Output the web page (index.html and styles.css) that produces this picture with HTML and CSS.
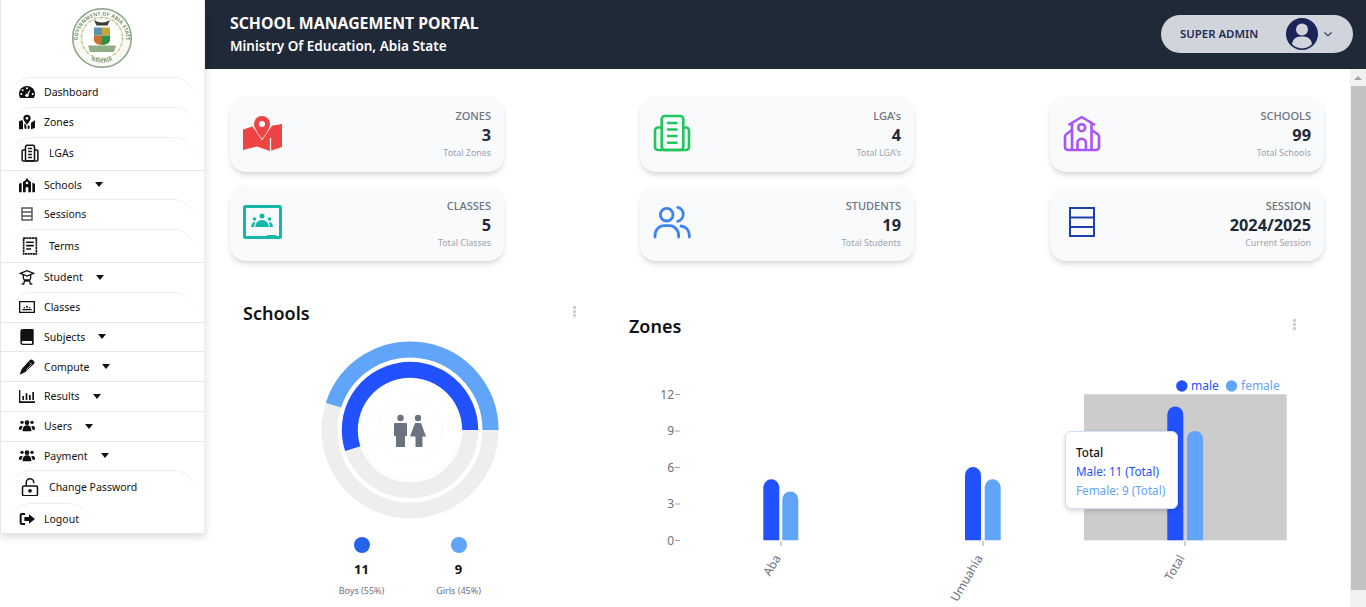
FILE: index.html
```html
<!DOCTYPE html>
<html lang="en">
<head>
<meta charset="utf-8">
<title>School Management Portal</title>
<link rel="stylesheet" href="styles.css">
</head>
<body>
<div class="app">
  <aside class="sidebar">
    <div class="logo">
      <svg width="62" height="62" viewBox="0 0 62 62">
        <defs>
          <path id="sealTop" d="M6.500 33a24.500 24.500 0 1 1 49 0"/>
          <path id="sealBot" d="M14 49a25.500 25.500 0 0 0 34 0"/>
        </defs>
        <g class="seal">
          <circle cx="31" cy="31" r="29.300" fill="#f8f9f4" stroke="#8aa283" stroke-width="1.500"/>
          <circle cx="31" cy="31" r="20.500" fill="#fff" stroke="#b9c7b0" stroke-width=".8"/>
          <circle cx="31" cy="31" r="20.500" fill="none" stroke="#d9b65c" stroke-width="1.800" stroke-dasharray="1.400 4.500"/>
          <text class="seal-text"><textPath href="#sealTop" startOffset="50%" text-anchor="middle">GOVERNMENT OF ABIA STATE</textPath></text>
          <text class="seal-text"><textPath href="#sealBot" startOffset="50%" text-anchor="middle">NIGERIA</textPath></text>
          <path d="M23 13q8 5 16 0l-2.500 5.500h-11z" fill="#3c3f38"/>
          <rect x="23" y="20.500" width="8" height="8" fill="#5a93b0"/>
          <rect x="31" y="20.500" width="8" height="8" fill="#c9a53b"/>
          <path d="M23 28.500h8V38q-6 0-8-4z" fill="#c9702f"/>
          <path d="M31 28.500h8V34q-2 4-8 4z" fill="#2f8f45"/>
          <path d="M17 38.500h28l-2 6.500H19z" fill="#90ad85"/>
        </g>
      </svg>
    </div>
    <ul class="menu">
      <li class="item pill"><svg class="ic" viewBox="0 0 24 24"><path d="M12 3A12 12 0 0 0 0 15c0 2.300.7 4.400 2 6h20c1.300-1.600 2-3.700 2-6A12 12 0 0 0 12 3z"/><g fill="#fff"><circle cx="12" cy="6.500" r="1.500"/><circle cx="5.500" cy="9.500" r="1.500"/><circle cx="3.500" cy="15" r="1.500"/><circle cx="20.500" cy="15" r="1.500"/><circle cx="12" cy="17" r="2.500"/><path d="M11 17l5-8 1 .6-4 8.400z"/></g></svg><span>Dashboard</span></li>
      <li class="item pill"><svg class="ic" viewBox="0 0 24 24"><path d="M12 1a5.500 5.500 0 0 0-5.500 5.500C6.500 10 12 16 12 16s5.500-6 5.500-9.500A5.500 5.500 0 0 0 12 1zm0 7.500a2 2 0 1 1 0-4 2 2 0 0 1 0 4zM0 11l5-2 1 3v11H0zM8 14l3 3v6l-3-1.500zM16 18l-3-1v6l3-1.500zM18 13l6-3.500V21l-6 2z"/></svg><span>Zones</span></li>
      <li class="item pill big"><svg class="ic lg ol" viewBox="0 0 24 24" stroke="#111" stroke-width="2"><rect x="6" y="1.500" width="12" height="21" rx="2"/><path d="M6 8H3a1.500 1.500 0 0 0-1.500 1.500V21A1.500 1.500 0 0 0 3 22.500h18a1.500 1.500 0 0 0 1.500-1.500V9.500A1.500 1.500 0 0 0 21 8h-3M9.500 6h5M9.500 10h5M9.500 14h5M9.500 18h5"/></svg><span>LGAs</span></li>
      <li class="item line"><svg class="ic" viewBox="0 0 24 24"><path d="M12 1l2 3.500 4 3V23h-4v-6a2 2 0 0 0-4 0v6H6V7.500l4-3zm0 6a2 2 0 1 0 0 4 2 2 0 0 0 0-4zM0 10l4-1.500V23H0zM24 10l-4-1.500V23h4z"/></svg><span>Schools</span><i class="caret"></i></li>
      <li class="item pill"><svg class="ic ol" viewBox="0 0 24 24" stroke="#555" stroke-width="2.200"><rect x="4.500" y="3" width="15" height="18"/><path d="M4.500 9h15M4.500 15h15"/></svg><span>Sessions</span></li>
      <li class="item pill big"><svg class="ic lg ol" viewBox="0 0 24 24" stroke="#111" stroke-width="2.200"><rect x="3.500" y="1.500" width="17" height="21" stroke-dasharray="3 .6"/><path d="M7 7h10M7 11.500h10M7 16h6.500"/></svg><span>Terms</span></li>
      <li class="item line"><svg class="ic ol" viewBox="0 0 24 24" stroke="#111" stroke-width="2"><path d="M2 6.500L12 2.500l10 4-10 4z"/><path d="M6.500 9v3.500a5.500 5.500 0 0 0 11 0V9M7 23l1.500-6.500h7L17 23M4 22.500h3M17 22.500h3"/></svg><span>Student</span><i class="caret"></i></li>
      <li class="item pill"><svg class="ic" viewBox="0 0 24 24"><path d="M0 3h24v18H0zm2 2v14h20V5z"/><path d="M5 15h14v1.800H5zM7 12h2v2H7zM11 10h2v4h-2zM15 12h2v2h-2z"/></svg><span>Classes</span></li>
      <li class="item line"><svg class="ic" viewBox="0 0 24 24"><path d="M6 0h14a2 2 0 0 1 2 2v20a2 2 0 0 1-2 2H6a4 4 0 0 1-4-4V4a4 4 0 0 1 4-4zm0 18a2 2 0 0 0 0 4h13.500v-4z"/></svg><span>Subjects</span><i class="caret"></i></li>
      <li class="item line"><svg class="ic" viewBox="0 0 24 24"><path d="M16 2a3.500 3.500 0 0 1 5 0l1 1a3.500 3.500 0 0 1 0 5L9 20l-8 3.500L4 15z"/><path d="M16 5l3 3-8 8" fill="none" stroke="#fff" stroke-width="1"/></svg><span>Compute</span><i class="caret"></i></li>
      <li class="item line"><svg class="ic" viewBox="0 0 24 24"><path d="M0 3h2v17h22v2.500H0zM5 12h2.500v6H5zM10 8h2.500v10H10zM15 10.500h2.500V18H15zM20 6h2.500v12H20z"/></svg><span>Results</span><i class="caret"></i></li>
      <li class="item line"><svg class="ic" viewBox="0 0 24 24"><use href="#people"/></svg><span>Users</span><i class="caret"></i></li>
      <li class="item line"><svg class="ic" viewBox="0 0 24 24"><use href="#people"/></svg><span>Payment</span><i class="caret"></i></li>
      <li class="item pill big"><svg class="ic lg ol" viewBox="0 0 24 24" stroke="#111" stroke-width="2"><rect x="2" y="10.500" width="20" height="13" rx="2"/><path d="M7 10.500V6a5 5 0 0 1 10 0v1"/><circle cx="12" cy="17" r="1.500" fill="#111"/></svg><span>Change Password</span></li>
      <li class="item pill fit"><svg class="ic" viewBox="0 0 24 24"><path d="M15 5l9 7-9 7v-4H8V9h7zM9 3H4a3 3 0 0 0-3 3v12a3 3 0 0 0 3 3h5v-3H4V6h5z"/></svg><span>Logout</span></li>
    </ul>
  </aside>

  <div class="page">
    <header class="topbar">
      <div class="brand">
        <div class="brand-title">SCHOOL MANAGEMENT PORTAL</div>
        <div class="brand-sub">Ministry Of Education, Abia State</div>
      </div>
      <div class="user">
        <span class="user-name">SUPER ADMIN</span>
        <svg class="avatar" width="32" height="32" viewBox="0 0 32 32"><circle cx="16" cy="16" r="16" fill="#1a2456"/><circle cx="16" cy="11.500" r="6" fill="#d1d5db"/><path d="M6 26c1-6 5-7.500 10-7.500S25 20 26 26a13.500 13.500 0 0 1-20 0z" fill="#d1d5db"/></svg>
        <svg class="chev" width="10" height="10" viewBox="0 0 10 10"><path d="M1.500 3.500L5 6.800l3.500-3.300" fill="none" stroke="#1e2a55" stroke-width="1.100"/></svg>
      </div>
    </header>

    <div class="body-row">
      <main class="content">
        <section class="cards">
          <article class="card">
            <svg class="card-ic" viewBox="0 0 40 40"><path d="M0 15.500L11 12l8 14 8-14 12-2v23l-12 4-13-4.500L0 36z" fill="#ef4444"/><path d="M9.500 11L19 25l9.500-14" fill="none" stroke="#f9fafb" stroke-width="1.500"/><path d="M27.500 24v13" stroke="#f9fafb" stroke-width="1.200"/><path d="M19 2a8 8 0 0 0-8 8c0 5 8 15 8 15s8-10 8-15a8 8 0 0 0-8-8z" fill="#ef4444"/><circle cx="19" cy="10" r="3" fill="#f9fafb"/></svg>
            <div class="card-text"><div class="card-title">ZONES</div><div class="card-value">3</div><div class="card-sub">Total Zones</div></div>
          </article>
          <article class="card">
            <svg class="card-ic" viewBox="0 0 40 40" fill="none" stroke="#22c55e" stroke-width="2.600" stroke-linecap="round" stroke-linejoin="round"><rect x="8.700" y="2" width="21.600" height="34" rx="3"/><path d="M8.700 13.500H5a3 3 0 0 0-3 3V33a3 3 0 0 0 3 3h28a3 3 0 0 0 3-3V16.500a3 3 0 0 0-3-3h-2.700M15 9h8.500M15 15.500h8.500M15 22h8.500M15 28.700h8.500"/></svg>
            <div class="card-text"><div class="card-title">LGA's</div><div class="card-value">4</div><div class="card-sub">Total LGA's</div></div>
          </article>
          <article class="card">
            <svg class="card-ic" viewBox="0 0 40 40" fill="none" stroke="#a855f7" stroke-width="2.600" stroke-linejoin="round"><path d="M5.500 11L18.700 3 32 11"/><path d="M9 8.500V36M28.500 8.500V36"/><path d="M9 16L3.500 20Q2 21 2 23v10a3 3 0 0 0 3 3h28a3 3 0 0 0 3-3V23q0-2-1.500-3L28.500 16"/><circle cx="18.700" cy="13.700" r="3.500"/><path d="M14.500 36v-7a4.200 4.200 0 0 1 8.400 0v7"/></svg>
            <div class="card-text"><div class="card-title">SCHOOLS</div><div class="card-value">99</div><div class="card-sub">Total Schools</div></div>
          </article>
          <article class="card">
            <svg class="card-ic" viewBox="0 0 40 40"><rect x="1.500" y="3.500" width="36" height="31" rx="1" fill="none" stroke="#14b8a6" stroke-width="3"/><rect x="24" y="32" width="9" height="3" fill="#14b8a6"/><circle cx="19" cy="13" r="2.500" fill="#14b8a6"/><circle cx="11.500" cy="16" r="1.800" fill="#14b8a6"/><circle cx="26.500" cy="16" r="1.800" fill="#14b8a6"/><path d="M12 24q1-7 7-7t7 7zM8 24q.5-5 4-5l-1 5zM30 24q-.5-5-4-5l1 5z" fill="#14b8a6"/></svg>
            <div class="card-text"><div class="card-title">CLASSES</div><div class="card-value">5</div><div class="card-sub">Total Classes</div></div>
          </article>
          <article class="card">
            <svg class="card-ic" viewBox="0 0 40 40" fill="none" stroke="#3b82f6" stroke-width="2.800" stroke-linecap="round"><circle cx="13.700" cy="11.700" r="6.300"/><path d="M2 34v-2a9.300 9.300 0 0 1 9.300-9.300h5A9.300 9.300 0 0 1 25.600 32v2M24.700 4.300a7.200 7.200 0 0 1 0 14M28 23a9 9 0 0 1 8.300 9v2"/></svg>
            <div class="card-text"><div class="card-title">STUDENTS</div><div class="card-value">19</div><div class="card-sub">Total Students</div></div>
          </article>
          <article class="card">
            <svg class="card-ic" viewBox="0 0 40 40" fill="none" stroke="#1e40af" stroke-width="2"><rect x="7" y="5" width="24" height="28"/><path d="M7 14.500h24M7 24h24"/></svg>
            <div class="card-text"><div class="card-title">SESSION</div><div class="card-value">2024/2025</div><div class="card-sub">Current Session</div></div>
          </article>
        </section>

        <section class="charts">
          <div class="panel-schools">
            <div class="panel-head">
              <h2 class="panel-title">Schools</h2>
              <span class="dots"><i></i><i></i><i></i></span>
            </div>
            <svg class="donut" width="180" height="180" viewBox="0 0 180 180">
              <circle cx="90" cy="90" r="80.500" fill="none" stroke="#eeeeee" stroke-width="16"/>
              <circle cx="90" cy="90" r="60.200" fill="none" stroke="#eeeeee" stroke-width="16"/>
              <circle cx="90" cy="90" r="50" fill="none" stroke="#f5f5f5" stroke-width=".6"/>
              <circle cx="90" cy="90" r="32" fill="none" stroke="#f5f5f5" stroke-width=".6"/>
              <path d="M170.500 90A80.500 80.500 0 0 0 13.440 65.120" fill="none" stroke="#60a5fa" stroke-width="16"/>
              <path d="M150.200 90A60.200 60.200 0 1 0 32.750 108.600" fill="none" stroke="#2251ff" stroke-width="16"/>
              <g fill="#6b7280">
                <circle cx="80.500" cy="78" r="3.200"/>
                <path d="M75 83h11a1 1 0 0 1 1 1v12h-2v11h-9V96h-2V84a1 1 0 0 1 1-1z"/>
                <circle cx="98" cy="78" r="3.200"/>
                <path d="M95 83h6l5 13.500h-3.500V107h-7V96.500H90z"/>
              </g>
            </svg>
            <div class="legend">
              <div class="legend-col"><i class="ldot boys"></i><b class="lnum">11</b><span class="ltxt">Boys (55%)</span></div>
              <div class="legend-col"><i class="ldot girls"></i><b class="lnum">9</b><span class="ltxt">Girls (45%)</span></div>
            </div>
          </div>

          <div class="panel-zones">
            <div class="panel-head zones-head">
              <h2 class="panel-title">Zones</h2>
              <span class="dots"><i></i><i></i><i></i></span>
            </div>
            <div class="chart-wrap">
              <svg class="bars" width="695" height="264" viewBox="615 343 695 264">
                <rect x="1084" y="394.300" width="202.700" height="146" fill="#cccccc"/>
                <g class="ytick" stroke="#9ca3af" stroke-width="1">
                  <path d="M675 394.500h5M675 431h5M675 467.500h5M675 504h5M675 540.500h5"/>
                </g>
                <g class="ylab" text-anchor="end">
                  <text x="674" y="398.500">12</text><text x="674" y="435">9</text><text x="674" y="471.500">6</text><text x="674" y="508">3</text><text x="674" y="544.500">0</text>
                </g>
                <g stroke="#a3a3a3" stroke-width="1"><path d="M781 541v5M983 541v5M1185 541v5"/></g>
                <g fill="#2251ff">
                  <path d="M763.300 540.300V487.300a8 8 0 0 1 16 0V540.300z"/>
                  <path d="M965 540.300V475.100a8 8 0 0 1 16 0V540.300z"/>
                  <path d="M1167.300 540.300V414.500a8 8 0 0 1 16 0V540.300z"/>
                </g>
                <g fill="#60a5fa">
                  <path d="M782.300 540.300V499.500a8 8 0 0 1 16 0V540.300z"/>
                  <path d="M984.700 540.300V487.300a8 8 0 0 1 16 0V540.300z"/>
                  <path d="M1187 540.300V438.900a8 8 0 0 1 16 0V540.300z"/>
                </g>
                <g class="xlab" text-anchor="end">
                  <text transform="translate(781 558) rotate(-60)">Aba</text>
                  <text transform="translate(983 558) rotate(-60)">Umuahia</text>
                  <text transform="translate(1185 558) rotate(-60)">Total</text>
                </g>
                <circle cx="1181.800" cy="386" r="5.700" fill="#2251ff"/>
                <text class="legtxt" x="1191" y="390" fill="#2251ff">male</text>
                <circle cx="1231.500" cy="386" r="5.700" fill="#60a5fa"/>
                <text class="legtxt" x="1241" y="390" fill="#60a5fa">female</text>
              </svg>
              <div class="tooltip">
                <div class="tip-title">Total</div>
                <div class="tip-male">Male: 11 (Total)</div>
                <div class="tip-female">Female: 9 (Total)</div>
              </div>
            </div>
          </div>
        </section>
      </main>
      <div class="scrollbar" aria-hidden="true">
        <div class="sb-up"><i></i></div>
        <div class="sb-thumb"></div>
        <div class="sb-end"></div>
      </div>
    </div>
  </div>
</div>
<svg class="defs" width="0" height="0"><defs><g id="people"><circle cx="12" cy="7" r="3.500"/><circle cx="4.500" cy="6.500" r="2.500"/><circle cx="19.500" cy="6.500" r="2.500"/><path d="M5.500 20v-2.500c0-4 3-6.500 6.500-6.500s6.500 2.500 6.500 6.500V20zM4 17.500c0-2 .5-4 1.800-5.500H3c-2 0-3 1.500-3 3.500v2zM20 17.500c0-2-.5-4-1.800-5.500H21c2 0 3 1.500 3 3.500v2z"/></g></defs></svg>
</body>
</html>
```
FILE: styles.css
```css
* { box-sizing: border-box; }
html, body { margin: 0; height: 100%; overflow: hidden; }
body { font-family: "Noto Sans", "Open Sans", sans-serif; background: #fff; color: #111; }
.defs { position: absolute; }
.app { display: flex; height: 607px; align-items: flex-start; }

/* sidebar */
.sidebar {
  width: 205px; flex: none; background: #fff; height: 533px;
  border-left: 1px solid #e5e7eb; border-right: 1px solid #eceef1;
  box-shadow: 0 4px 8px rgba(0,0,0,.14);
  position: relative; z-index: 2;
}
.logo { height: 77px; padding: 7px 0 0 70px; }
.seal { filter: blur(.45px); }
.seal-text { font-size: 5px; font-weight: 600; fill: #62805c; letter-spacing: .25px; }
.menu { list-style: none; margin: 0; padding: 0; }
.item {
  display: flex; align-items: center; height: 29.750px; gap: 9px;
  font-size: 10.5px; color: #111; padding: 0 0 1px 18px;
}
.item.line { border-top: 1px solid #e5e7eb; padding-bottom: 0; }
.item.pill { margin: 0 10px; padding-left: 8px; border-top: 1px solid #eceef1; border-radius: 20px 20px 0 0; }
.item.big { height: 33px; padding-left: 10px; gap: 10px; }
.item.fit { width: 78px; padding-bottom: 0; }
.ic { width: 16px; height: 16px; flex: none; fill: #111; }
.ic.lg { width: 18px; height: 18px; }
.ic.ol { fill: none; }
.caret { width: 0; height: 0; margin-left: 4px; border-left: 4px solid transparent; border-right: 4px solid transparent; border-top: 5px solid #111; }

/* header */
.page { flex: 1; min-width: 0; height: 607px; display: flex; flex-direction: column; }
.topbar {
  height: 69px; flex: none; background: #1f2937; color: #fff;
  display: flex; align-items: center; justify-content: space-between;
  padding: 0 13px 0 25px;
}
.brand-title { font-size: 15.800px; font-weight: 700; line-height: 23px; }
.brand-sub { font-size: 13.500px; font-weight: 600; line-height: 23px; }
.user {
  width: 192px; height: 38px; border-radius: 19px; background: #d1d5db;
  display: flex; align-items: center; padding-left: 19px; margin-top: -1px;
}
.user-name { font-size: 11.400px; font-weight: 600; color: #1e2a55; width: 106px; margin-top: -1px; }
.chev { margin-left: 5px; }

/* body */
.body-row { flex: 1; display: flex; min-height: 0; }
.content { flex: 1; min-width: 0; padding: 27px 26px 0 25px; overflow: hidden; }
.scrollbar { width: 16px; flex: none; background: #f1f1f1; display: flex; flex-direction: column; }
.sb-up { height: 17px; display: flex; align-items: center; justify-content: center; }
.sb-up i { width: 0; height: 0; border-left: 4px solid transparent; border-right: 4px solid transparent; border-bottom: 4px solid #a3a3a3; }
.sb-thumb { height: 504px; margin-left: 1px; background: #c1c1c1; }
.sb-end { flex: 1; }

/* cards */
.cards { display: grid; grid-template-columns: repeat(3, 274px); justify-content: space-between; row-gap: 14px; }
.card {
  height: 75.500px; background: #f9fafb; border-radius: 16px;
  box-shadow: 0 4px 6px -1px rgba(0,0,0,.13), 0 2px 4px -2px rgba(0,0,0,.1);
  display: flex; align-items: center; justify-content: space-between; padding: 0 13px;
}
.card-ic { width: 40px; height: 40px; flex: none; }
.card-text { text-align: right; padding-bottom: 2px; }
.card-title { font-size: 11px; font-weight: 500; line-height: 17px; color: #6b7280; }
.card-value { font-size: 16.300px; font-weight: 700; line-height: 23px; color: #1f2937; }
.card-sub { font-size: 8.900px; line-height: 11px; color: #9ca3af; }

/* charts */
.charts { display: grid; grid-template-columns: 360px 695px; column-gap: 25px; margin-top: 34.500px; }
.panel-head { display: flex; justify-content: space-between; align-items: center; height: 34px; padding: 0 14px 0 13px; }
.zones-head { padding: 0 14px 0 14px; margin-top: 13px; height: 34px; }
.panel-title { margin: 0; font-size: 18px; font-weight: 600; color: #111; }
.dots { display: flex; flex-direction: column; gap: 1px; margin-top: -3px; }
.dots i { width: 3px; height: 3px; border: .7px solid #9ca3af; border-radius: 50%; }
.donut { display: block; margin: 10.500px auto 0; }
.legend { display: flex; justify-content: center; gap: 47px; margin: 17px 0 0; }
.legend-col { width: 50px; display: flex; flex-direction: column; align-items: center; }
.ldot { width: 16px; height: 16px; border-radius: 50%; }
.boys { background: #2563eb; }
.girls { background: #60a5fa; }
.lnum { font-size: 13px; font-weight: 700; line-height: 18px; margin-top: 7px; color: #111; }
.ltxt { font-size: 9px; line-height: 14px; margin-top: 6px; color: #6b7280; white-space: nowrap; }

.chart-wrap { position: relative; }
.bars { display: block; }
.bars text { font-family: "Noto Sans", "Open Sans", sans-serif; }
.ylab text { font-size: 12px; fill: #6b7280; }
.xlab text { font-size: 12px; fill: #6b7280; }
.legtxt { font-size: 12px; }
.tooltip {
  position: absolute; left: 450px; top: 88px; width: 113px; height: 78px;
  background: #fff; border: 1px solid #cfe0f7; border-radius: 6px;
  box-shadow: 0 2px 5px rgba(0,0,0,.16); padding: 11px 10px; font-size: 11.700px; line-height: 19px; white-space: nowrap;
}
.tip-title { font-weight: 500; color: #111; }
.tip-male { color: #2251ff; }
.tip-female { color: #60a5fa; }
```
